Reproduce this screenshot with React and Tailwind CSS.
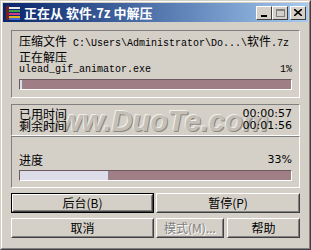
import React from 'react';

const cjk = { fontFamily: '"Noto Sans CJK SC", "Liberation Sans", sans-serif' };
const mono = { fontFamily: '"Liberation Mono", "Noto Sans CJK SC", monospace' };

function Sunken({ className = '', children }) {
  return (
    <div className={`border border-t-[#808080] border-l-[#808080] border-b-white border-r-white ${className}`}>
      {children}
    </div>
  );
}

function Bar({ pct }) {
  return (
    <div className="h-[11px] border border-t-[#6e5a5e] border-l-[#6e5a5e] border-b-white border-r-white bg-[#a07e85] flex">
      <div className="h-full bg-[#dcdde8] border-r border-[#8a8a96]" style={{ width: `${pct}%` }} />
    </div>
  );
}

function Btn({ children, primary, disabled, className = '' }) {
  return (
    <div className={`${primary ? 'border border-black' : ''} ${className}`}>
      <div className="h-full border border-t-white border-l-white border-b-[#404040] border-r-[#404040]">
        <div className="h-full flex items-center justify-center border border-transparent border-b-[#808080] border-r-[#808080] text-[12px] leading-none">
          <span className={disabled ? 'text-[#808080] [text-shadow:1px_1px_0_#fff]' : 'text-black'} style={cjk}>
            {children}
          </span>
        </div>
      </div>
    </div>
  );
}

function CapBtn({ children }) {
  return (
    <div className="w-[16px] h-[14px] bg-[#d4d0c8] border border-t-white border-l-white border-b-[#404040] border-r-[#404040] flex items-center justify-center">
      {children}
    </div>
  );
}

export default function App() {
  return (
    <div className="w-[311px] h-[250px] bg-[#d4d0c8] border border-t-[#d4d0c8] border-l-[#d4d0c8] border-b-[#404040] border-r-[#404040] overflow-hidden">
      <div className="h-full border border-t-white border-l-white border-b-[#808080] border-r-[#808080] p-px flex flex-col">
        {/* title bar */}
        <div className="h-[19px] bg-gradient-to-r from-[#0a246a] to-[#a6caf0] flex items-center pl-[2px] pr-[2px]">
          <svg width="16" height="16" viewBox="0 0 16 16" className="shrink-0">
            <rect x="1" y="1" width="3" height="14" fill="#7a1f1f" />
            <rect x="4" y="2" width="11" height="2" fill="#e8e8e8" />
            <rect x="4" y="5" width="11" height="2" fill="#3aa04a" />
            <rect x="4" y="8" width="11" height="2" fill="#c83a8a" />
            <rect x="4" y="11" width="11" height="2" fill="#e0b020" />
            <rect x="4" y="13" width="11" height="2" fill="#3a6ad0" />
          </svg>
          <span className="ml-[3px] text-white font-bold text-[13px] leading-none whitespace-pre" style={cjk}>
            正在从 软件.7z 中解压
          </span>
          <div className="ml-auto flex items-center">
            <CapBtn>
              <div className="w-[6px] h-[2px] bg-black mt-[6px]" />
            </CapBtn>
            <CapBtn>
              <div className="w-[9px] h-[8px] border border-[#808080] border-t-2" />
            </CapBtn>
            <div className="w-[2px]" />
            <CapBtn>
              <svg width="8" height="7" viewBox="0 0 8 7">
                <path d="M0 0 L8 7 M8 0 L0 7" stroke="black" strokeWidth="1.6" />
              </svg>
            </CapBtn>
          </div>
        </div>

        {/* body */}
        <div className="flex-1 px-[8px] pt-[8px] flex flex-col relative">
          {/* watermark, behind the panels */}
          <div
            className="absolute left-[34px] top-[85px] text-[29px] leading-none font-bold italic text-[#c4c0b8] [text-shadow:-1px_-1px_0_#f0eee8,1px_1px_0_#8c8880] pointer-events-none whitespace-nowrap"
            style={{ fontFamily: '"Liberation Sans", sans-serif' }}
          >
            www.DuoTe.com
          </div>

          <div className="relative z-10 flex flex-col">
            <Sunken className="h-[68px] px-[7px] pt-[3px]">
              <div className="text-[12px] leading-[13px] whitespace-nowrap">
                <span style={cjk}>压缩文件</span>
                <span className="text-[10px]" style={mono}> C:\Users\Administrator\Do...\</span>
                <span style={cjk}>软件</span>
                <span className="text-[10px]" style={mono}>.7z</span>
              </div>
              <div className="text-[12px] leading-[13px]" style={cjk}>正在解压</div>
              <div className="flex justify-between text-[10px] leading-[13px]" style={mono}>
                <span>ulead_gif_animator.exe</span>
                <span>1%</span>
              </div>
              <div className="mt-[3px]">
                <Bar pct={1} />
              </div>
            </Sunken>

            <Sunken className="mt-[6px] h-[32px] px-[7px] pt-[3px] flex justify-between">
              <div className="text-[12px] leading-[12px]" style={cjk}>
                <div>已用时间</div>
                <div>剩余时间</div>
              </div>
              <div className="text-[11px] leading-[12px] text-right" style={{ fontFamily: '"DejaVu Sans", sans-serif' }}>
                <div>00:00:57</div>
                <div>00:01:56</div>
              </div>
            </Sunken>
            <Sunken className="h-[52px] px-[7px] pt-[16px]">
              <div className="flex justify-between items-end">
                <span className="text-[12px] leading-[13px]" style={cjk}>进度</span>
                <span className="text-[11px] leading-[13px]" style={{ fontFamily: '"DejaVu Sans", sans-serif' }}>33%</span>
              </div>
              <div className="mt-[4px]">
                <Bar pct={33} />
              </div>
            </Sunken>

            <div className="mt-[5px] grid grid-cols-[143px_1fr] gap-x-[2px] gap-y-[5px]">
              <Btn primary className="h-[20px]">后台(B)</Btn>
              <Btn className="h-[20px]">暂停(P)</Btn>
              <Btn className="h-[20px]">取消</Btn>
              <div className="grid grid-cols-[68px_1fr] gap-x-[3px]">
                <Btn disabled className="h-[20px]">模式(M)...</Btn>
                <Btn className="h-[20px]">帮助</Btn>
              </div>
            </div>
          </div>
        </div>
      </div>
    </div>
  );
}
